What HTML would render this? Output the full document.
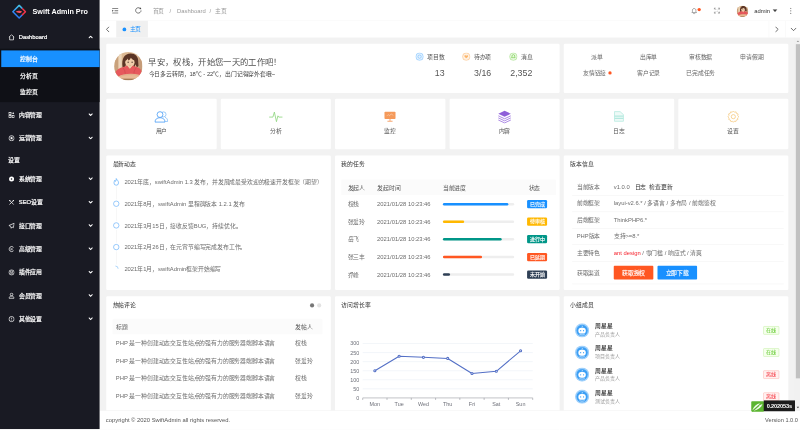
<!DOCTYPE html>
<html lang="zh-CN">
<head>
<meta charset="utf-8">
<title>Swift Admin Pro</title>
<style>
*{box-sizing:border-box;margin:0;padding:0}
html,body{width:800px;height:431px;overflow:hidden;background:#fff;font-family:"Liberation Sans",sans-serif;}
#app{position:absolute;left:0;top:0;width:1920px;height:1030px;transform:scale(.4166667);transform-origin:0 0;overflow:hidden;font-size:14px;color:#666;background:#f2f2f2;filter:opacity(1)}
svg{display:block}
i{font-style:normal;display:block}
.a{position:absolute;white-space:nowrap}
.side{position:absolute;left:0;top:0;width:239px;height:1030px;background:#191a23;color:#fff;-webkit-text-stroke:.5px #fff}
.logo{position:absolute;left:0;top:0;width:239px;height:50px;-webkit-text-stroke:0}
.logo span{position:absolute;left:78px;top:0;line-height:54px;font-size:17.3px;font-weight:bold;color:#fff;white-space:nowrap}
.mi{position:absolute;left:0;width:239px;height:56px;line-height:56px;color:#fff;font-size:14px}
.mi svg.ic{position:absolute;left:19.5px;top:21px}
.mi .tx{position:absolute;left:45px;top:0;white-space:nowrap}
.mi svg.ar{position:absolute;left:212px;top:24px}
.sub{position:absolute;left:0;top:117px;width:239px;height:128px;background:#0f1016}
.si{position:absolute;left:0;width:239px;height:40px;line-height:40px;color:#fff;font-size:14px;padding-left:48px}
.si.on{left:3px;width:236px;background:#1890ff;padding-left:45px}
.lab{position:absolute;left:20px;top:362px;line-height:44px;font-size:14px;color:#fff}
.hd{position:absolute;left:239px;top:0;width:1681px;height:50px;background:#fff;border-bottom:1px solid #f4f4f4}
.hd .t{position:absolute;top:0;line-height:50px;font-size:14px;color:#999;white-space:nowrap}
.tabs{position:absolute;left:239px;top:50px;width:1681px;height:40px;background:#fff}
.tab{position:absolute;left:40px;top:0;width:76px;height:40px;background:#f0f0f0;line-height:40px;color:#1890ff;font-size:14px}
.tab i{position:absolute;left:15px;top:16px;width:9px;height:9px;border-radius:50%;background:#1890ff}
.tab b{position:absolute;left:32px;font-weight:normal}
.card{position:absolute;background:#fff;border-radius:3px;overflow:hidden}
.ch{position:absolute;left:15px;top:0;line-height:41px;font-size:14px;color:#333;white-space:nowrap}
.ic2{position:absolute;left:0;width:100%;text-align:center;font-size:14px;color:#555;top:68px;line-height:20px}
.th{position:absolute;background:#fbfbfb}
.c{font-size:14px;color:#6c6c6c;line-height:20px}
.bar{position:absolute;width:171px;height:6px;border-radius:3px;background:#eee}
.bar i{height:6px;border-radius:3px}
.bdg{position:absolute;width:48px;height:20px;line-height:20px;border-radius:3px;color:#fff;font-size:12px;text-align:center;-webkit-text-stroke:.3px #fff}
.ln{position:absolute;height:1px;background:#eee}
.btn{position:absolute;height:33px;line-height:33px;width:95px;text-align:center;color:#fff;font-size:14px;border-radius:2px;-webkit-text-stroke:.3px #fff}
.tag{position:absolute;width:38px;height:20px;line-height:18px;font-size:12px;text-align:center;border-radius:2px;border:1px solid}
.tg{color:#52c41a;background:#f6ffed;border-color:#b7eb8f}
.tr{color:#f5222d;background:#fff1f0;border-color:#ffa39e}
.ft{position:absolute;left:239px;top:985px;width:1681px;height:45px;background:#fff;border-top:1px solid #eee;line-height:45.5px;font-size:14px;color:#555}
.sb{position:absolute;left:1907px;top:90px;width:13px;height:896px;background:#f1f1f1}
.sb i{position:absolute;left:2.5px;top:16px;width:10.5px;height:802px;background:#c1c1c1}
</style>
</head>
<body>
<svg width="0" height="0" style="position:absolute"><defs>
<clipPath id="avc"><circle cx="32" cy="32" r="32"/></clipPath>
<g id="ava"><g clip-path="url(#avc)">
<rect width="64" height="64" fill="#dcb892"/>
<rect x="0" y="0" width="9" height="64" fill="#c9a27c"/>
<rect x="10" y="0" width="7" height="64" fill="#ecd6ba"/>
<rect x="55" y="0" width="9" height="64" fill="#c59c79"/>
<path d="M19 34C16 14 24 3 37 3c11 0 18 7 17.5 19l.5 9c0 2-2 3-4 2.5l-3-6-2 6H27l-1-5-2 7c-2 1-4.5 .5-5-1.5z" fill="#5b3526"/>
<ellipse cx="35.5" cy="23" rx="10.5" ry="12.5" fill="#f1cdaa"/>
<path d="M23 20c1-9 7-13 14-12.5 7 .5 11 5 11.5 12-5-.5-8-3-11-6.5-1 3-3 5-5 6-1-1.5-1.5-3-1.5-4.5-2 3-5 5-8 5.5z" fill="#5b3526"/>
<ellipse cx="31.5" cy="23" rx="1.3" ry="1.8" fill="#3b251d"/><ellipse cx="40.5" cy="23" rx="1.3" ry="1.8" fill="#3b251d"/>
<path d="M34.5 30q1.5 1 3 0" stroke="#c7876f" stroke-width=".9" fill="none"/>
<path d="M2 47c3-7 10-12 20-14l8-2 5.5 6 5.5-6 8 2c8 2 12 6 14 12l-2 10H5z" fill="#e6595c"/>
<path d="M30 31l5.5 6.5 5.5-6.5c-3 1.5-8 1.5-11 0z" fill="#f1cdaa"/>
<path d="M20 36c3 3 5 8 5 13M50 35c-3 4-5 8-5.5 13" stroke="#c9454c" stroke-width="1.2" fill="none"/>
<path d="M10 55c8-6 30-8 46-4l6 3-3 8H8z" fill="#e9ba95"/>
<path d="M13 54.5c12-4 28-5 40-2" stroke="#d49f7c" stroke-width="1" fill="none"/>
<rect x="0" y="60" width="64" height="4" fill="#a57a55"/>
</g></g>
</defs></svg>
<div id="app">
<div class="card" style="left:255px;top:105px;width:1088px;height:117.5px">
<svg class="a" style="left:18.5px;top:19.5px" width="68" height="68" viewBox="0 0 64 64"><use href="#ava"/></svg>
<div class="a " style="left:101px;top:30px;font-size:20px;line-height:30px;color:#505050">早安，权栈，开始您一天的工作吧！</div>
<div class="a " style="left:101.5px;top:61.5px;font-size:14px;line-height:20px;color:#444">今日多云转阴，18℃ - 22℃，出门记得穿外套哦~</div>
<div class="a" style="right:276px;top:19px;text-align:right"><div style="display:flex;align-items:center;justify-content:flex-end;height:24px"><svg width="20" height="20" viewBox="0 0 20 20" style="margin-right:8px"><circle cx="10" cy="10" r="9" fill="#1890ff" fill-opacity=".12" stroke="#1890ff" stroke-opacity=".55" stroke-width="1.3"/><circle cx="10" cy="10" r="4" fill="none" stroke="#1890ff" stroke-opacity=".6" stroke-width="1.2"/></svg><span style="font-size:14px;color:#555">项目数</span></div><div style="font-size:23px;color:#555;line-height:30px;margin-top:10.5px;transform:scaleX(.92);transform-origin:100% 50%">13</div></div>
<div class="a" style="right:164px;top:19px;text-align:right"><div style="display:flex;align-items:center;justify-content:flex-end;height:24px"><svg width="20" height="20" viewBox="0 0 20 20" style="margin-right:8px"><circle cx="10" cy="10" r="9" fill="#fa8c16" fill-opacity=".12" stroke="#fa8c16" stroke-opacity=".55" stroke-width="1.3"/><path d="M10 14l-4-4a2.3 2.3 0 0 1 4-2.4A2.3 2.3 0 0 1 14 10z" fill="#fa8c16" fill-opacity=".6"/></svg><span style="font-size:14px;color:#555">待办项</span></div><div style="font-size:23px;color:#555;line-height:30px;margin-top:10.5px;transform:scaleX(.92);transform-origin:100% 50%">3/16</div></div>
<div class="a" style="right:65px;top:19px;text-align:right"><div style="display:flex;align-items:center;justify-content:flex-end;height:24px"><svg width="20" height="20" viewBox="0 0 20 20" style="margin-right:8px"><circle cx="10" cy="10" r="9" fill="#52c41a" fill-opacity=".12" stroke="#52c41a" stroke-opacity=".55" stroke-width="1.3"/><path d="M10 5c-2.2 0-3.3 1.6-3.3 3.5v2.3l-1 1.6h8.6l-1-1.6V8.5C13.3 6.6 12.2 5 10 5z" fill="none" stroke="#52c41a" stroke-width="1.2"/></svg><span style="font-size:14px;color:#555">消息</span></div><div style="font-size:23px;color:#555;line-height:30px;margin-top:10.5px;transform:scaleX(.92);transform-origin:100% 50%">2,352</div></div>
</div>
<div class="card" style="left:1353px;top:105px;width:539px;height:117.5px">
<div class="a c" style="left:80.5px;top:20.5px;width:0;display:flex;justify-content:center;color:#666"><span>派单</span></div>
<div class="a c" style="left:203.5px;top:20.5px;width:0;display:flex;justify-content:center;color:#666"><span>出库单</span></div>
<div class="a c" style="left:328.5px;top:20.5px;width:0;display:flex;justify-content:center;color:#666"><span>审核数据</span></div>
<div class="a c" style="left:452px;top:20.5px;width:0;display:flex;justify-content:center;color:#666"><span>申请假期</span></div>
<div class="a c" style="left:80.5px;top:59px;width:0;display:flex;justify-content:center;color:#666"><span>友情链接<i style="display:inline-block;width:8px;height:8px;border-radius:50%;background:#ff5722;margin-left:5px"></i></span></div>
<div class="a c" style="left:203.5px;top:59px;width:0;display:flex;justify-content:center;color:#666"><span>客户记录</span></div>
<div class="a c" style="left:328.5px;top:59px;width:0;display:flex;justify-content:center;color:#666"><span>已完成任务</span></div>
</div>
<div class="card" style="left:255px;top:237px;width:264.5px;height:120.5px">
<svg class="a" style="left:115.2px;top:27.5px" width="34" height="30" viewBox="0 0 34 30"><circle cx="22.5" cy="9.5" r="6" stroke="#6fb3f8" stroke-width="1.6" fill="none"/><path d="M26 16.5c4.5 1.5 6.5 5 6.5 10h-6" stroke="#6fb3f8" stroke-width="1.6" fill="none"/><circle cx="14" cy="10" r="7" stroke="#3d97f5" stroke-width="1.8" fill="#fff"/><path d="M2 28c0-7 5-10.5 12-10.5S26 21 26 28z" stroke="#3d97f5" stroke-width="1.8" fill="#fff" stroke-linejoin="round"/></svg>
<div class="ic2">用户</div>
</div>
<div class="card" style="left:529.5px;top:237px;width:264.5px;height:120.5px">
<svg class="a" style="left:115.2px;top:27.5px" width="34" height="30" viewBox="0 0 34 30"><path d="M2 16h8l3.5-12 5 23 3.5-14 2 3h8" stroke="#8fd67f" stroke-width="2" fill="none" stroke-linejoin="round" stroke-linecap="round"/></svg>
<div class="ic2">分析</div>
</div>
<div class="card" style="left:804px;top:237px;width:264.5px;height:120.5px">
<svg class="a" style="left:117.2px;top:29px" width="30" height="27" viewBox="0 0 34 30"><rect x="2" y="2" width="30" height="20" rx="2" fill="#f59a5b"/><path d="M8 14l4-4 4 3 4-5 6 4" stroke="#fff" stroke-opacity=".6" stroke-width="1.5" fill="none"/><path d="M17 22v5M10 28h14" stroke="#f59a5b" stroke-width="2.4"/></svg>
<div class="ic2">监控</div>
</div>
<div class="card" style="left:1078.5px;top:237px;width:264.5px;height:120.5px">
<svg class="a" style="left:115.2px;top:25.5px" width="34" height="34" viewBox="0 0 34 34"><path d="M17 3l15 7-15 7-15-7z" fill="#8f5fd9"/><path d="M2 15l15 7 15-7M2 20l15 7 15-7M2 25l15 7 15-7" stroke="#a682e2" stroke-width="2.2" fill="none"/></svg>
<div class="ic2">内容</div>
</div>
<div class="card" style="left:1353px;top:237px;width:264.5px;height:120.5px">
<svg class="a" style="left:119.8px;top:29px" width="25" height="27" viewBox="0 0 28 30"><path d="M2 2h15l9 8v18H2z" fill="#eefaf7" stroke="#b4e9df" stroke-width="2" stroke-linejoin="round"/><path d="M2 14h24M2 20h24" stroke="#b4e9df" stroke-width="3"/></svg>
<div class="ic2">日志</div>
</div>
<div class="card" style="left:1627.5px;top:237px;width:264.5px;height:120.5px">
<svg class="a" style="left:116.2px;top:26.5px" width="32" height="32" viewBox="0 0 32 32"><circle cx="16" cy="16" r="5" stroke="#f5c77a" stroke-width="1.8" fill="none"/><path d="M16 2.5l3 3.2 4.3-1 1.2 4.3 4.2 1.3-1 4.3L30.5 18l-3.2 3 .9 4.3-4.3 1.2-1.3 4.2-4.3-1L16 32.5l-2.3-2.8-4.3 1-1.3-4.2-4.3-1.2.9-4.3L1.5 18l2.8-3.4-1-4.3 4.2-1.3 1.2-4.3 4.3 1z" transform="translate(1.6 .2) scale(.9)" stroke="#f5c77a" stroke-width="1.9" fill="none" stroke-linejoin="round"/></svg>
<div class="ic2">设置</div>
</div>
<div class="card" style="left:255px;top:372.5px;width:539px;height:323.5px">
<div class="ch">最新动态</div>
<div class="a" style="left:23.5px;top:72.5px;width:1px;height:200px;background:#ececec"></div>
<svg class="a" style="left:15px;top:53px" width="18" height="22" viewBox="0 0 18 22"><rect width="18" height="22" fill="#fff"/><path d="M9 2.5c1 3 5.5 5 5.5 10.5a5.5 5.5 0 0 1-11 0C3.5 10 5 8.5 5.5 6.5c1 .8 1.5 2 1.5 3C8.5 8 9.5 5.5 9 2.5z" stroke="#4fa5f8" stroke-width="1.5" fill="none" stroke-linejoin="round"/></svg>
<div class="a c" style="left:43.5px;top:54px">2021年底，swiftAdmin 1.3 发布，并发展成最受欢迎的极速开发框架（期望）</div>
<svg class="a" style="left:15px;top:105px" width="18" height="22" viewBox="0 0 18 22"><rect width="18" height="22" fill="#fff"/><circle cx="9" cy="11" r="6.5" stroke="#5eacf8" stroke-width="1.5" fill="#fff"/></svg>
<div class="a c" style="left:43.5px;top:106px">2021年8月，swiftAdmin 里程碑版本 1.2.1 发布</div>
<svg class="a" style="left:15px;top:157px" width="18" height="22" viewBox="0 0 18 22"><rect width="18" height="22" fill="#fff"/><circle cx="9" cy="11" r="6.5" stroke="#5eacf8" stroke-width="1.5" fill="#fff"/></svg>
<div class="a c" style="left:43.5px;top:158px">2021年3月15日，接收反馈BUG，持续优化。</div>
<svg class="a" style="left:15px;top:209px" width="18" height="22" viewBox="0 0 18 22"><rect width="18" height="22" fill="#fff"/><circle cx="9" cy="11" r="6.5" stroke="#5eacf8" stroke-width="1.5" fill="#fff"/></svg>
<div class="a c" style="left:43.5px;top:210px">2021年2月26日，在元宵节编写完成发布工作。</div>
<svg class="a" style="left:15px;top:261px" width="18" height="22" viewBox="0 0 18 22"><rect width="18" height="22" fill="#fff"/><path d="M7 4.5a6.5 6.5 0 0 1 6.5 6.5" stroke="#8cc5fa" stroke-width="1.7" fill="none"/></svg>
<div class="a c" style="left:43.5px;top:262px">2021年1月，swiftAdmin框架开始编写</div>
</div>
<div class="card" style="left:804px;top:372.5px;width:539px;height:323.5px">
<div class="ch">我的任务</div>
<div class="th" style="left:15px;top:58.5px;width:515px;height:37px"></div>
<div class="a c" style="left:30px;top:68px;color:#555">发起人</div>
<div class="a c" style="left:101px;top:68px;color:#555">发起时间</div>
<div class="a c" style="left:258.5px;top:68px;color:#555">当前进度</div>
<div class="a c" style="left:464.5px;top:68px;color:#555">状态</div>
<div class="a c" style="left:30px;top:107.1px">权栈</div>
<div class="a c" style="left:101px;top:107.1px">2021/01/28 10:23:46</div>
<div class="bar" style="left:258.5px;top:114.1px"><i style="width:92%;background:#1890ff"></i></div>
<div class="bdg" style="left:461px;top:107.1px;background:#1890ff">已完成</div>
<div class="a c" style="left:30px;top:149.5px">张爱玲</div>
<div class="a c" style="left:101px;top:149.5px">2021/01/28 10:23:46</div>
<div class="bar" style="left:258.5px;top:156.5px"><i style="width:30%;background:#ffb800"></i></div>
<div class="bdg" style="left:461px;top:149.5px;background:#ffb800">待审核</div>
<div class="a c" style="left:30px;top:191.9px">岳飞</div>
<div class="a c" style="left:101px;top:191.9px">2021/01/28 10:23:46</div>
<div class="bar" style="left:258.5px;top:198.9px"><i style="width:83%;background:#009688"></i></div>
<div class="bdg" style="left:461px;top:191.9px;background:#009688">进行中</div>
<div class="a c" style="left:30px;top:234.3px">张三丰</div>
<div class="a c" style="left:101px;top:234.3px">2021/01/28 10:23:46</div>
<div class="bar" style="left:258.5px;top:241.3px"><i style="width:55%;background:#ff5722"></i></div>
<div class="bdg" style="left:461px;top:234.3px;background:#ff5722">已延期</div>
<div class="a c" style="left:30px;top:276.7px">乔峰</div>
<div class="a c" style="left:101px;top:276.7px">2021/01/28 10:23:46</div>
<div class="bar" style="left:258.5px;top:283.7px"><i style="width:10%;background:#2f4056"></i></div>
<div class="bdg" style="left:461px;top:276.7px;background:#2f4056">未开始</div>
</div>
<div class="card" style="left:1353px;top:372.5px;width:539px;height:323.5px">
<div class="ch">版本信息</div>
<div class="a c" style="left:31px;top:66.3px">当前版本</div>
<div class="a c" style="left:120px;top:66.3px">v1.0.0 &nbsp;&nbsp;<span style="color:#333">日志 &nbsp;检查更新</span></div>
<div class="a c" style="left:31px;top:105.8px">前端框架</div>
<div class="a c" style="left:120px;top:105.8px">layui-v2.6.* / 多语言 / 多布局 / 前端鉴权</div>
<div class="a c" style="left:31px;top:145.1px">后端框架</div>
<div class="a c" style="left:120px;top:145.1px">ThinkPHP6.*</div>
<div class="a c" style="left:31px;top:184.5px">PHP版本</div>
<div class="a c" style="left:120px;top:184.5px">支持>=8.*</div>
<div class="a c" style="left:31px;top:224px">主要特色</div>
<div class="a c" style="left:120px;top:224px"><span style="color:#f5222d">ant design</span> / 零门槛 / 响应式 / 清爽</div>
<div class="a c" style="left:31px;top:271px">获取渠道</div>
<div class="ln" style="left:20px;top:96.5px;width:508px"></div>
<div class="ln" style="left:20px;top:135.5px;width:508px"></div>
<div class="ln" style="left:20px;top:175.5px;width:508px"></div>
<div class="ln" style="left:20px;top:214.5px;width:508px"></div>
<div class="ln" style="left:20px;top:254.5px;width:508px"></div>
<div class="ln" style="left:20px;top:308px;width:508px"></div>
<div class="btn" style="left:120px;top:265.5px;background:#ff5722">获取授权</div>
<div class="btn" style="left:225px;top:265.5px;background:#1890ff">立即下载</div>
</div>
<div class="card" style="left:255px;top:711px;width:539px;height:320px">
<div class="ch">热帖评论</div>
<i class="a" style="left:488.5px;top:17px;width:10px;height:10px;border-radius:50%;background:#777"></i>
<i class="a" style="left:506px;top:17px;width:10px;height:10px;border-radius:50%;background:#e2e2e2"></i>
<div class="th" style="left:15px;top:54px;width:504px;height:37px;border-radius:3px 3px 0 0"></div>
<div class="a c" style="left:23px;top:63px;color:#555">标题</div>
<div class="a c" style="left:454px;top:63px;color:#555">发帖人</div>
<div class="a c" style="left:23px;top:102px">PHP 是一种创建动态交互性站点的强有力的服务器端脚本语言</div>
<div class="a c" style="left:454px;top:102px">权栈</div>
<div class="a c" style="left:23px;top:144.5px">PHP 是一种创建动态交互性站点的强有力的服务器端脚本语言</div>
<div class="a c" style="left:454px;top:144.5px">张爱玲</div>
<div class="a c" style="left:23px;top:187px">PHP 是一种创建动态交互性站点的强有力的服务器端脚本语言</div>
<div class="a c" style="left:454px;top:187px">权栈</div>
<div class="a c" style="left:23px;top:229.5px">PHP 是一种创建动态交互性站点的强有力的服务器端脚本语言</div>
<div class="a c" style="left:454px;top:229.5px">张爱玲</div>
</div>
<div class="card" style="left:804px;top:711px;width:539px;height:320px">
<div class="ch">访问增长率</div>
<svg class="a" style="left:0;top:0" width="539" height="320" viewBox="0 0 539 320" font-family="Liberation Sans, sans-serif" font-size="13" fill="#6e7079"><text x="58.5" y="248.6" text-anchor="end">0</text><path d="M66.5 222.2H474.5" stroke="#e0e6f1" stroke-width="1"/><text x="58.5" y="226.8" text-anchor="end">50</text><path d="M66.5 200.5H474.5" stroke="#e0e6f1" stroke-width="1"/><text x="58.5" y="205.1" text-anchor="end">100</text><path d="M66.5 178.8H474.5" stroke="#e0e6f1" stroke-width="1"/><text x="58.5" y="183.3" text-anchor="end">150</text><path d="M66.5 157H474.5" stroke="#e0e6f1" stroke-width="1"/><text x="58.5" y="161.6" text-anchor="end">200</text><path d="M66.5 135.2H474.5" stroke="#e0e6f1" stroke-width="1"/><text x="58.5" y="139.8" text-anchor="end">250</text><path d="M66.5 113.5H474.5" stroke="#e0e6f1" stroke-width="1"/><text x="58.5" y="118.1" text-anchor="end">300</text><path d="M66.5 244H474.5" stroke="#6e7079" stroke-width="1"/><path d="M66.5 244v5" stroke="#6e7079" stroke-width="1"/><path d="M124.8 244v5" stroke="#6e7079" stroke-width="1"/><path d="M183.1 244v5" stroke="#6e7079" stroke-width="1"/><path d="M241.4 244v5" stroke="#6e7079" stroke-width="1"/><path d="M299.6 244v5" stroke="#6e7079" stroke-width="1"/><path d="M357.9 244v5" stroke="#6e7079" stroke-width="1"/><path d="M416.2 244v5" stroke="#6e7079" stroke-width="1"/><path d="M474.5 244v5" stroke="#6e7079" stroke-width="1"/><text x="95.6" y="263" text-anchor="middle">Mon</text><text x="153.9" y="263" text-anchor="middle">Tue</text><text x="212.2" y="263" text-anchor="middle">Wed</text><text x="270.5" y="263" text-anchor="middle">Thu</text><text x="328.8" y="263" text-anchor="middle">Fri</text><text x="387.1" y="263" text-anchor="middle">Sat</text><text x="445.4" y="263" text-anchor="middle">Sun</text><path d="M95.6 178.8 L153.9 143.9 L212.2 146.6 L270.5 149.2 L328.8 185.3 L387.1 180.1 L445.4 130.9" stroke="#5470c6" stroke-width="2.6" fill="none" stroke-linejoin="round"/><circle cx="95.6" cy="178.8" r="2.5" fill="#fff" stroke="#5470c6" stroke-width="2.5"/><circle cx="153.9" cy="143.9" r="2.5" fill="#fff" stroke="#5470c6" stroke-width="2.5"/><circle cx="212.2" cy="146.6" r="2.5" fill="#fff" stroke="#5470c6" stroke-width="2.5"/><circle cx="270.5" cy="149.2" r="2.5" fill="#fff" stroke="#5470c6" stroke-width="2.5"/><circle cx="328.8" cy="185.3" r="2.5" fill="#fff" stroke="#5470c6" stroke-width="2.5"/><circle cx="387.1" cy="180.1" r="2.5" fill="#fff" stroke="#5470c6" stroke-width="2.5"/><circle cx="445.4" cy="130.9" r="2.5" fill="#fff" stroke="#5470c6" stroke-width="2.5"/></svg>
</div>
<div class="card" style="left:1353px;top:711px;width:539px;height:320px">
<div class="ch">小组成员</div>
<svg class="a" style="left:26.8px;top:64.5px" width="34" height="34" viewBox="0 0 34 34"><circle cx="17" cy="17" r="17" fill="#9fd0fb"/><circle cx="17" cy="17" r="13.5" fill="#3c9ff5"/><path d="M17 5.5c.8 1.6.8 2.6 0 4" stroke="#fff" stroke-width="1.6" fill="none"/><rect x="8" y="10.5" width="18" height="14" rx="7" fill="#fff"/><circle cx="13.5" cy="17.5" r="1.5" fill="#3c9ff5"/><circle cx="20.5" cy="17.5" r="1.5" fill="#3c9ff5"/><path d="M11 26.5c4 1.8 8 1.8 12 0" stroke="#fff" stroke-width="1.5" fill="none"/></svg>
<div class="a " style="left:76px;top:61.5px;font-size:14px;line-height:20px;color:#222;-webkit-text-stroke:.2px #333">周星星</div>
<div class="a " style="left:76px;top:82.5px;font-size:12px;line-height:18px;color:#999">产品负责人</div>
<div class="tag tg" style="left:479px;top:71.5px">在线</div>
<svg class="a" style="left:26.8px;top:117.5px" width="34" height="34" viewBox="0 0 34 34"><circle cx="17" cy="17" r="17" fill="#9fd0fb"/><circle cx="17" cy="17" r="13.5" fill="#3c9ff5"/><path d="M17 5.5c.8 1.6.8 2.6 0 4" stroke="#fff" stroke-width="1.6" fill="none"/><rect x="8" y="10.5" width="18" height="14" rx="7" fill="#fff"/><circle cx="13.5" cy="17.5" r="1.5" fill="#3c9ff5"/><circle cx="20.5" cy="17.5" r="1.5" fill="#3c9ff5"/><path d="M11 26.5c4 1.8 8 1.8 12 0" stroke="#fff" stroke-width="1.5" fill="none"/></svg>
<div class="a " style="left:76px;top:114.5px;font-size:14px;line-height:20px;color:#222;-webkit-text-stroke:.2px #333">周星星</div>
<div class="a " style="left:76px;top:135.5px;font-size:12px;line-height:18px;color:#999">项目负责人</div>
<div class="tag tg" style="left:479px;top:124.5px">在线</div>
<svg class="a" style="left:26.8px;top:170.5px" width="34" height="34" viewBox="0 0 34 34"><circle cx="17" cy="17" r="17" fill="#9fd0fb"/><circle cx="17" cy="17" r="13.5" fill="#3c9ff5"/><path d="M17 5.5c.8 1.6.8 2.6 0 4" stroke="#fff" stroke-width="1.6" fill="none"/><rect x="8" y="10.5" width="18" height="14" rx="7" fill="#fff"/><circle cx="13.5" cy="17.5" r="1.5" fill="#3c9ff5"/><circle cx="20.5" cy="17.5" r="1.5" fill="#3c9ff5"/><path d="M11 26.5c4 1.8 8 1.8 12 0" stroke="#fff" stroke-width="1.5" fill="none"/></svg>
<div class="a " style="left:76px;top:167.5px;font-size:14px;line-height:20px;color:#222;-webkit-text-stroke:.2px #333">周星星</div>
<div class="a " style="left:76px;top:188.5px;font-size:12px;line-height:18px;color:#999">产品负责人</div>
<div class="tag tr" style="left:479px;top:177.5px">离线</div>
<svg class="a" style="left:26.8px;top:223.5px" width="34" height="34" viewBox="0 0 34 34"><circle cx="17" cy="17" r="17" fill="#9fd0fb"/><circle cx="17" cy="17" r="13.5" fill="#3c9ff5"/><path d="M17 5.5c.8 1.6.8 2.6 0 4" stroke="#fff" stroke-width="1.6" fill="none"/><rect x="8" y="10.5" width="18" height="14" rx="7" fill="#fff"/><circle cx="13.5" cy="17.5" r="1.5" fill="#3c9ff5"/><circle cx="20.5" cy="17.5" r="1.5" fill="#3c9ff5"/><path d="M11 26.5c4 1.8 8 1.8 12 0" stroke="#fff" stroke-width="1.5" fill="none"/></svg>
<div class="a " style="left:76px;top:220.5px;font-size:14px;line-height:20px;color:#222;-webkit-text-stroke:.2px #333">周星星</div>
<div class="a " style="left:76px;top:241.5px;font-size:12px;line-height:18px;color:#999">测试负责人</div>
<div class="tag tr" style="left:479px;top:230.5px">离线</div>
</div>
<div class="sb"><i></i><svg width="10" height="8" style="position:absolute;left:3px;top:5px"><path d="M2 6L5 2 8 6z" fill="#999"/></svg><svg width="10" height="8" style="position:absolute;left:3px;top:884px"><path d="M2 2L5 6 8 2z" fill="#444"/></svg></div>
<div class="ft"><span class="a" style="left:15px">copyright © 2020 SwiftAdmin all rights reserved.</span><span class="a" style="right:5px;font-size:13.5px">Version 1.0.0</span></div>
<div class="a" style="left:1803px;top:962.5px;width:31px;height:25px;background:#5cb531;border-radius:2px;overflow:hidden"><svg width="31" height="25" viewBox="0 0 31 25"><path d="M3 21C6 12 13 6 21 4.5l-4 5.5c3-1 6-1.5 10-3.5C24 15 17 20 6 22.5z" fill="#fff" fill-opacity=".92"/><path d="M2 24.5L19 9.5" stroke="#5cb531" stroke-width="3"/></svg></div><div class="a" style="left:1833px;top:960.5px;width:75px;height:26.5px;background:#1b1b1b;color:#fff;font-size:13.5px;line-height:27px;text-align:center;font-weight:bold;letter-spacing:-.3px">0.202053s</div>

<div class="hd">
 <svg class="a" style="left:29.5px;top:19px" width="15.5" height="13.5" viewBox="0 0 17 15"><path d="M0 1.2h17M0 13.8h17M6.5 7.5H17" stroke="#333" stroke-width="1.8" fill="none"/><path d="M0 4.6l4 2.9-4 2.9z" fill="#333"/></svg>
 <svg class="a" style="left:84px;top:16px" width="18" height="18" viewBox="0 0 18 18"><path d="M15.5 9a6.5 6.5 0 1 1-2.2-4.9" stroke="#444" stroke-width="1.7" fill="none"/><path d="M11.2 5.6l4.6.6-.4-4.8z" fill="#444"/></svg>
 <span class="t" style="left:127px">首页</span><span class="t" style="left:168px">/</span><span class="t" style="left:186px">Dashboard</span><span class="t" style="left:264px">/</span><span class="t" style="left:278px">主页</span>
 <svg class="a" style="left:1419.5px;top:18.5px" width="14" height="15" viewBox="0 0 16 17"><path d="M8 1.5c-3 0-4.8 2.2-4.8 5v3.6L1.6 12.6h12.8l-1.6-2.5V6.5c0-2.8-1.8-5-4.8-5z" stroke="#555" stroke-width="1.4" fill="none"/><path d="M6 14.5a2 2 0 0 0 4 0" stroke="#555" stroke-width="1.4" fill="none"/></svg>
 <i class="a" style="left:1435px;top:19px;width:8px;height:8px;border-radius:50%;background:#ff5722"></i>
 <svg class="a" style="left:1474px;top:18px" width="15" height="15" viewBox="0 0 15 15"><path d="M1 5V1h4M10 1h4v4M14 10v4h-4M5 14H1v-4M1.5 1.5l4 4M13.5 1.5l-4 4M13.5 13.5l-4-4M1.5 13.5l4-4" stroke="#666" stroke-width="1.2" fill="none"/></svg>
 <svg class="a" style="left:1529px;top:13px" width="28" height="28" viewBox="0 0 64 64"><use href="#ava"/></svg>
 <span class="t" style="left:1571px;color:#333">admin</span>
 <svg class="a" style="left:1615px;top:22px" width="12" height="7"><path d="M0 0h12L6 7z" fill="#444"/></svg>
 <svg class="a" style="left:1657px;top:17.5px" width="4" height="16"><circle cx="2" cy="2" r="1.5" fill="#666"/><circle cx="2" cy="8" r="1.5" fill="#666"/><circle cx="2" cy="14" r="1.5" fill="#666"/></svg>
</div>
<div class="tabs">
 <svg class="a" style="left:15px;top:13px" width="9" height="15" viewBox="0 0 9 15"><path d="M8 1L1.5 7.5 8 14" stroke="#333" stroke-width="1.7" fill="none"/></svg>
 <div class="tab"><i></i><b>主页</b></div>
 <div class="a" style="left:1606px;top:0;width:1px;height:40px;background:#f2f2f2"></div>
 <div class="a" style="left:1646px;top:0;width:1px;height:40px;background:#f2f2f2"></div>
 <svg class="a" style="left:1621px;top:13px" width="9" height="15" viewBox="0 0 9 15"><path d="M1 1l6.5 6.5L1 14" stroke="#333" stroke-width="1.7" fill="none"/></svg>
 <svg class="a" style="left:1658px;top:16px" width="15" height="9" viewBox="0 0 15 9"><path d="M1 1l6.5 6.5L14 1" stroke="#333" stroke-width="1.7" fill="none"/></svg>
</div>

<div class="side">
<div class="logo">
<svg class="a" style="left:27.5px;top:9.5px" width="36" height="36" viewBox="0 0 38 38"><defs><linearGradient id="lg" x1="0" y1="0" x2="0" y2="1"><stop offset="0" stop-color="#45c4e6"/><stop offset=".55" stop-color="#2f86f6"/><stop offset="1" stop-color="#2a7af5"/></linearGradient></defs><path d="M26 10L19 3 3 19l16 16 7-7" stroke="url(#lg)" stroke-width="3.8" fill="none" stroke-linejoin="round" stroke-linecap="round"/><path d="M27.5 11.5L35 19l-7.5 7.5" stroke="#f0344a" stroke-width="3.8" fill="none" stroke-linejoin="round" stroke-linecap="round"/><path d="M10 19.5c3.5-2.8 7.5-3.4 11-2.6l5.5 1.6-3 3c-4.5 1.4-9 .8-13.5-2z" fill="#f4505f"/></svg>
<span>Swift Admin Pro</span></div>
<div class="mi" style="top:61px"><svg class="ic" width="15.5" height="15.5" viewBox="0 0 18 18"><path d="M1.5 8.5L9 1.8l7.5 6.7M3.7 7.5V16h10.6V7.5" stroke="#fff" stroke-width="2.1" fill="none"/></svg><span class="tx">Dashboard</span><svg class="ar" width="11" height="8" viewBox="0 0 11 8"><path d="M1 6.5L5.5 2 10 6.5" stroke="#fff" stroke-width="2.5" fill="none"/></svg></div>
<div class="sub"><div class="si on" style="top:4px">控制台</div><div class="si" style="top:44px">分析页</div><div class="si" style="top:84px">监控页</div></div>
<div class="mi" style="top:246.5px"><svg class="ic" width="15.5" height="15.5" viewBox="0 0 18 18"><rect x="1.5" y="2" width="6" height="6" stroke="#fff" stroke-width="2" fill="none"/><rect x="1.5" y="11" width="6" height="5" stroke="#fff" stroke-width="2" fill="none"/><rect x="10.5" y="11" width="6" height="5" stroke="#fff" stroke-width="2" fill="none"/><path d="M13.5 1.5l3 3-3 3-3-3z" fill="#fff"/></svg><span class="tx">内容管理</span><svg class="ar" width="11" height="8" viewBox="0 0 11 8"><path d="M1 1.5l4.5 4.5L10 1.5" stroke="#fff" stroke-width="2.5" fill="none"/></svg></div>
<div class="mi" style="top:302.5px"><svg class="ic" width="15.5" height="15.5" viewBox="0 0 18 18"><circle cx="9" cy="9" r="7.2" stroke="#fff" stroke-width="2" fill="none"/><path d="M9 4.2l1.4 3 3.3.4-2.4 2.2.6 3.2L9 11.4 6.1 13l.6-3.2-2.4-2.2 3.3-.4z" fill="#fff"/></svg><span class="tx">运营管理</span><svg class="ar" width="11" height="8" viewBox="0 0 11 8"><path d="M1 1.5l4.5 4.5L10 1.5" stroke="#fff" stroke-width="2.5" fill="none"/></svg></div>
<div class="lab">设置</div>
<div class="mi" style="top:401px"><svg class="ic" width="15.5" height="15.5" viewBox="0 0 18 18"><circle cx="9" cy="9" r="7" fill="#fff"/><circle cx="9" cy="9" r="2.2" fill="#191a23"/></svg><span class="tx">系统管理</span><svg class="ar" width="11" height="8" viewBox="0 0 11 8"><path d="M1 1.5l4.5 4.5L10 1.5" stroke="#fff" stroke-width="2.5" fill="none"/></svg></div>
<div class="mi" style="top:457px"><svg class="ic" width="15.5" height="15.5" viewBox="0 0 18 18"><path d="M3 3l12 12M15 3L3 15" stroke="#fff" stroke-width="2.1" fill="none"/><circle cx="4" cy="4" r="2" fill="#fff"/><circle cx="14" cy="4" r="2" fill="#fff"/></svg><span class="tx">SEO设置</span><svg class="ar" width="11" height="8" viewBox="0 0 11 8"><path d="M1 1.5l4.5 4.5L10 1.5" stroke="#fff" stroke-width="2.5" fill="none"/></svg></div>
<div class="mi" style="top:513px"><svg class="ic" width="15.5" height="15.5" viewBox="0 0 18 18"><path d="M16.5 2L1.5 8.5l5 2 1.5 5.5 2.5-3.5 3.5 2z" stroke="#fff" stroke-width="2" fill="none" stroke-linejoin="round"/></svg><span class="tx">接口管理</span><svg class="ar" width="11" height="8" viewBox="0 0 11 8"><path d="M1 1.5l4.5 4.5L10 1.5" stroke="#fff" stroke-width="2.5" fill="none"/></svg></div>
<div class="mi" style="top:569px"><svg class="ic" width="15.5" height="15.5" viewBox="0 0 18 18"><path d="M14.5 4.5A7 7 0 1 0 14.5 13.5" stroke="#fff" stroke-width="2.1" fill="none"/><path d="M6 8h6M6 10.5h6" stroke="#fff" stroke-width="1.6"/></svg><span class="tx">高级管理</span><svg class="ar" width="11" height="8" viewBox="0 0 11 8"><path d="M1 1.5l4.5 4.5L10 1.5" stroke="#fff" stroke-width="2.5" fill="none"/></svg></div>
<div class="mi" style="top:625px"><svg class="ic" width="15.5" height="15.5" viewBox="0 0 18 18"><circle cx="9" cy="9" r="7.2" stroke="#fff" stroke-width="2" fill="none"/><path d="M5 8.5l4 2.2 4-2.2M5 11l4 2.2 4-2.2M9 4.5l4 2-4 2-4-2z" stroke="#fff" stroke-width="1.4" fill="none"/></svg><span class="tx">插件应用</span><svg class="ar" width="11" height="8" viewBox="0 0 11 8"><path d="M1 1.5l4.5 4.5L10 1.5" stroke="#fff" stroke-width="2.5" fill="none"/></svg></div>
<div class="mi" style="top:681px"><svg class="ic" width="15.5" height="15.5" viewBox="0 0 18 18"><circle cx="9" cy="5.5" r="3.6" stroke="#fff" stroke-width="2" fill="none"/><path d="M2 16c0-4 3-6 7-6s7 2 7 6z" stroke="#fff" stroke-width="2" fill="none"/></svg><span class="tx">会员管理</span><svg class="ar" width="11" height="8" viewBox="0 0 11 8"><path d="M1 1.5l4.5 4.5L10 1.5" stroke="#fff" stroke-width="2.5" fill="none"/></svg></div>
<div class="mi" style="top:737px"><svg class="ic" width="15.5" height="15.5" viewBox="0 0 18 18"><circle cx="9" cy="9" r="7.2" stroke="#fff" stroke-width="2" fill="none"/><path d="M9 5v5M9 12v1.5" stroke="#fff" stroke-width="1.8"/></svg><span class="tx">其他设置</span><svg class="ar" width="11" height="8" viewBox="0 0 11 8"><path d="M1 1.5l4.5 4.5L10 1.5" stroke="#fff" stroke-width="2.5" fill="none"/></svg></div>
</div>
</div>
</body>
</html>
